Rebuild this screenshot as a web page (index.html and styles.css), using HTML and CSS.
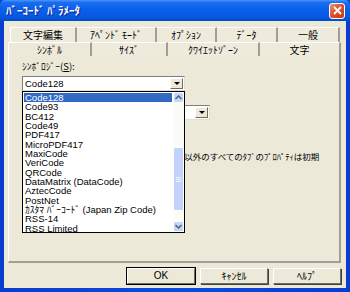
FILE: index.html
```html
<!DOCTYPE html>
<html lang="ja">
  <head>
    <meta charset="UTF-8" />
    <title>ﾊﾞｰｺｰﾄﾞ ﾊﾟﾗﾒｰﾀ</title>
    <link rel="stylesheet" href="styles.css">
  </head>
  <body>
    <div class="window">
      <div class="titlebar">
        <span class="title">ﾊﾞｰｺｰﾄﾞ ﾊﾟﾗﾒｰﾀ</span>
        <span class="close">
          <svg width="9" height="9" viewBox="0 0 9 9">
            <path d="M1 1 L8 8 M8 1 L1 8" stroke="#fff" stroke-width="1.8" />
          </svg>
        </span>
      </div>
      <div class="frame">
        <div class="face">
          <div class="tabrow back">
            <div class="tab">文字編集</div>
            <div class="tab">ｱﾍﾟﾝﾄﾞ ﾓｰﾄﾞ</div>
            <div class="tab">ｵﾌﾟｼｮﾝ</div>
            <div class="tab">ﾃﾞｰﾀ</div>
            <div class="tab">一般</div>
          </div>
          <div class="tabrow front">
            <div class="tab selected">ｼﾝﾎﾞﾙ</div>
            <div class="tab">ｻｲｽﾞ</div>
            <div class="tab">ｸﾜｲｴｯﾄｿﾞｰﾝ</div>
            <div class="tab">文字</div>
          </div>

          <div class="panel">
            <div class="label">ｼﾝﾎﾞﾛｼﾞｰ(<u>S</u>):</div>
            <div class="combo main">
              <span class="value">Code128</span>
              <span class="arrow"><i></i></span>

              <ul class="droplist">
                <li class="sel">Code128</li>
                <li>Code93</li>
                <li>BC412</li>
                <li>Code49</li>
                <li>PDF417</li>
                <li>MicroPDF417</li>
                <li>MaxiCode</li>
                <li>VeriCode</li>
                <li>QRCode</li>
                <li>DataMatrix (DataCode)</li>
                <li>AztecCode</li>
                <li>PostNet</li>
                <li>ｶｽﾀﾏ ﾊﾞｰｺｰﾄﾞ (Japan Zip Code)</li>
                <li>RSS-14</li>
                <li>RSS Limited</li>
                <div class="scroll">
                  <span class="sbtn"><svg width="7" height="5" viewBox="0 0 7 5"><path d="M0.5 4 L3.5 1 L6.5 4" fill="none" stroke="#4D6185" stroke-width="1.5" /></svg></span>
                  <span class="track"></span>
                  <span class="thumb"><b></b><b></b><b></b></span>
                  <span class="track low"></span>
                  <span class="sbtn"><svg width="7" height="5" viewBox="0 0 7 5"><path d="M0.5 1 L3.5 4 L6.5 1" fill="none" stroke="#4D6185" stroke-width="1.5" /></svg></span>
                </div>
              </ul>
            </div>

            <div class="combo second">
              <span class="value"></span>
              <span class="arrow"><i></i></span>
            </div>

            <p class="note">ｼﾝﾎﾞﾙ以外のすべてのﾀﾌﾞのﾌﾟﾛﾊﾟﾃｨは初期</p>
          </div>

          <div class="buttons">
            <button class="default">OK</button>
            <button>ｷｬﾝｾﾙ</button>
            <button>ﾍﾙﾌﾟ</button>
          </div>
        </div>
      </div>
    </div>
  </body>
</html>
```

FILE: styles.css
```css
body {
  margin: 0;
  width: 350px;
  height: 292px;
  overflow: hidden;
  font-family: "Noto Sans CJK JP", sans-serif;
  font-size: 9.5px;
  color: #000;
}

.window {
  width: 350px;
  height: 292px;
  display: flex;
  flex-direction: column;
  background: #0A45D8;
}

.titlebar {
  height: 21px;
  flex: none;
  display: flex;
  align-items: center;
  justify-content: space-between;
  padding: 0 5px 0 6px;
  border-radius: 5px 5px 0 0;
  background: linear-gradient(#4B95FB 0%, #1A6DF0 12%, #0A5FEA 45%, #0858E2 80%, #024CC8 100%);
}

.title {
  color: #fff;
  font-weight: bold;
  font-size: 11px;
  line-height: 13px;
  text-shadow: 1px 1px 0 #0A1E8A;
}

.close {
  width: 16px;
  height: 16px;
  box-sizing: border-box;
  border: 1px solid #fff;
  border-radius: 3px;
  background: linear-gradient(135deg, #EC9574 0%, #DE5330 45%, #C53C1A 100%);
  display: flex;
  align-items: center;
  justify-content: center;
}

.frame {
  flex: 1;
  padding: 0 4px 4px 4px;
  display: flex;
  background: linear-gradient(90deg, #0A3CD0, #0B4BE0 50%, #0A3CD0);
}

.face {
  flex: 1;
  background: #ECE9D8;
  padding: 6px 5px 0 4px;
  display: flex;
  flex-direction: column;
}

/* tabs */
.tabrow {
  display: grid;
  height: 14px;
}

.tabrow.back {
  grid-template-columns: 67px 80px 60px 61px 62px;
  margin-left: 2px;
  margin-right: 1px;
  height: 15px;
}

.tabrow.front {
  grid-template-columns: 84px 76px 92px 81px;
}

.tab {
  display: flex;
  align-items: center;
  justify-content: center;
  font-size: 10px;
  line-height: 12px;
  border-top: 1px solid #fff;
  border-right: 2px solid #A19F94;
  background: #EEEBDD;
}

.tab:first-child {
  border-left: 1px solid #fff;
}

.tab.selected {
  background: #ECE9D8;
}

/* panel */
.panel {
  height: 207px;
  box-sizing: border-box;
  border-left: 1px solid #fff;
  border-right: 2px solid #A19F94;
  border-bottom: 2px solid #A19F94;
  padding: 5px 0 0 13px;
  position: relative;
}

.label {
  line-height: 11px;
  height: 11px;
}

.combo {
  position: relative;
  height: 15px;
  box-sizing: border-box;
  background: #fff;
  border: 1px solid #7F7F7F;
  border-right-color: #E0DFD6;
  border-bottom-color: #E0DFD6;
  display: flex;
}

.combo.main {
  width: 163px;
  margin-top: 4px;
}

.combo.second {
  width: 120px;
  margin: 14px 0 0 68px;
}

.combo .value {
  flex: 1;
  padding-left: 2px;
  font-family: "Liberation Sans", sans-serif;
  font-size: 9.5px;
  line-height: 13px;
}

.combo .arrow {
  width: 13px;
  margin: 1px;
  box-sizing: border-box;
  background: #ECE9D8;
  border: 1px solid #fff;
  border-right-color: #6E6C63;
  border-bottom-color: #6E6C63;
  display: flex;
  align-items: center;
  justify-content: center;
}

.combo .arrow i {
  width: 0;
  height: 0;
  border-left: 3px solid transparent;
  border-right: 3px solid transparent;
  border-top: 3px solid #000;
}

.droplist {
  position: absolute;
  left: -1px;
  top: 14px;
  width: 163px;
  height: 142px;
  box-sizing: border-box;
  margin: 0;
  padding: 1px 12px 0 1px;
  list-style: none;
  background: #fff;
  border: 1px solid #000;
  z-index: 2;
  font-family: "Liberation Sans", "Noto Sans CJK JP", sans-serif;
  font-size: 9.5px;
}

.droplist li {
  height: 9.35px;
  line-height: 9.35px;
  padding-left: 1px;
  white-space: nowrap;
}

.droplist li.sel {
  background: #316AC5;
  color: #fff;
}

.scroll {
  position: absolute;
  right: 0;
  top: 0;
  bottom: 0;
  width: 11px;
  display: flex;
  flex-direction: column;
  background: #FBFBF8;
}

.sbtn {
  height: 11px;
  flex: none;
  box-sizing: border-box;
  border: 1px solid #fff;
  border-radius: 2px;
  background: #C5D5F7;
  display: flex;
  align-items: center;
  justify-content: center;
}

.track {
  height: 44px;
  flex: none;
}

.track.low {
  height: 10px;
}

.thumb {
  flex: 1;
  box-sizing: border-box;
  border: 1px solid #fff;
  border-radius: 2px;
  background: #C3D3FB;
  display: flex;
  flex-direction: column;
  align-items: center;
  justify-content: center;
  gap: 1px;
}

.thumb b {
  width: 5px;
  height: 1px;
  background: #EEF2FD;
}

.note {
  margin: 31px 0 0 141px;
  font-size: 8.5px;
  line-height: 10px;
  white-space: nowrap;
}

/* buttons */
.buttons {
  display: flex;
  justify-content: flex-end;
  gap: 5px;
  margin-top: 5px;
}

button {
  width: 68px;
  height: 16px;
  padding: 0;
  font-family: "Noto Sans CJK JP", sans-serif;
  font-size: 10px;
  line-height: 12px;
  background: #ECE9D8;
  border: 1px solid;
  border-color: #fff #716F64 #716F64 #fff;
  box-shadow: 1px 1px 0 #404040;
}

button.default {
  outline: 1px solid #000;
  font-family: "Liberation Sans", sans-serif;
  font-size: 10px;
}
```
